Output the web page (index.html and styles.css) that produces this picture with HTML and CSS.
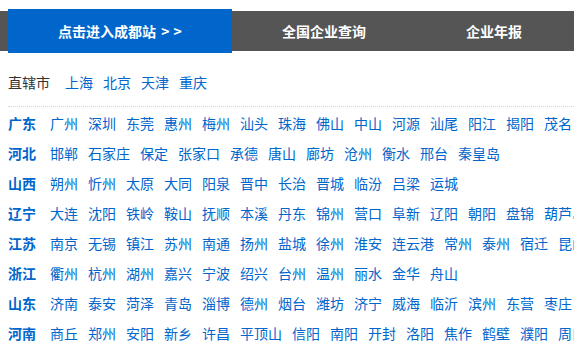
FILE: index.html
```html
<!DOCTYPE html>
<html lang="zh-CN">
<head>
<meta charset="utf-8">
<title>城市站</title>
<link rel="stylesheet" href="styles.css">
</head>
<body>
<div class="nav">
  <a class="tab tab-active">点击进入成都站 <span class="chev">&gt;&gt;</span></a>
  <a class="tab">全国企业查询</a>
  <a class="tab">企业年报</a>
</div>
<div class="content">
  <div class="direct">
    <span class="direct-label">直辖市</span>
    <a class="city">上海</a><a class="city">北京</a><a class="city">天津</a><a class="city">重庆</a>
  </div>
  <div class="provinces">
    <div class="row"><span class="prov">广东</span><a class="city">广州</a><a class="city">深圳</a><a class="city">东莞</a><a class="city">惠州</a><a class="city">梅州</a><a class="city">汕头</a><a class="city">珠海</a><a class="city">佛山</a><a class="city">中山</a><a class="city">河源</a><a class="city">汕尾</a><a class="city">阳江</a><a class="city">揭阳</a><a class="city">茂名</a><a class="city">湛江</a></div>
    <div class="row"><span class="prov">河北</span><a class="city">邯郸</a><a class="city">石家庄</a><a class="city">保定</a><a class="city">张家口</a><a class="city">承德</a><a class="city">唐山</a><a class="city">廊坊</a><a class="city">沧州</a><a class="city">衡水</a><a class="city">邢台</a><a class="city">秦皇岛</a></div>
    <div class="row"><span class="prov">山西</span><a class="city">朔州</a><a class="city">忻州</a><a class="city">太原</a><a class="city">大同</a><a class="city">阳泉</a><a class="city">晋中</a><a class="city">长治</a><a class="city">晋城</a><a class="city">临汾</a><a class="city">吕梁</a><a class="city">运城</a></div>
    <div class="row"><span class="prov">辽宁</span><a class="city">大连</a><a class="city">沈阳</a><a class="city">铁岭</a><a class="city">鞍山</a><a class="city">抚顺</a><a class="city">本溪</a><a class="city">丹东</a><a class="city">锦州</a><a class="city">营口</a><a class="city">阜新</a><a class="city">辽阳</a><a class="city">朝阳</a><a class="city">盘锦</a><a class="city">葫芦岛</a></div>
    <div class="row"><span class="prov">江苏</span><a class="city">南京</a><a class="city">无锡</a><a class="city">镇江</a><a class="city">苏州</a><a class="city">南通</a><a class="city">扬州</a><a class="city">盐城</a><a class="city">徐州</a><a class="city">淮安</a><a class="city">连云港</a><a class="city">常州</a><a class="city">泰州</a><a class="city">宿迁</a><a class="city">昆山</a></div>
    <div class="row"><span class="prov">浙江</span><a class="city">衢州</a><a class="city">杭州</a><a class="city">湖州</a><a class="city">嘉兴</a><a class="city">宁波</a><a class="city">绍兴</a><a class="city">台州</a><a class="city">温州</a><a class="city">丽水</a><a class="city">金华</a><a class="city">舟山</a></div>
    <div class="row"><span class="prov">山东</span><a class="city">济南</a><a class="city">泰安</a><a class="city">菏泽</a><a class="city">青岛</a><a class="city">淄博</a><a class="city">德州</a><a class="city">烟台</a><a class="city">潍坊</a><a class="city">济宁</a><a class="city">威海</a><a class="city">临沂</a><a class="city">滨州</a><a class="city">东营</a><a class="city">枣庄</a></div>
    <div class="row"><span class="prov">河南</span><a class="city">商丘</a><a class="city">郑州</a><a class="city">安阳</a><a class="city">新乡</a><a class="city">许昌</a><a class="city">平顶山</a><a class="city">信阳</a><a class="city">南阳</a><a class="city">开封</a><a class="city">洛阳</a><a class="city">焦作</a><a class="city">鹤壁</a><a class="city">濮阳</a><a class="city">周口</a></div>
  </div>
</div>
</body>
</html>
```
FILE: styles.css
```css
html, body {
  margin: 0;
  padding: 0;
  background: #fff;
  overflow: hidden;
}
body {
  font-family: "Noto Sans CJK SC", "Microsoft YaHei", sans-serif;
  font-size: 14px;
  color: #333;
  width: 574px;
}
.nav {
  margin-top: 11px;
  height: 40px;
  background: #555555;
  display: flex;
  padding-left: 8px;
  white-space: nowrap;
}
.tab {
  display: block;
  padding: 0 50px;
  line-height: 40px;
  color: #fff;
  font-weight: bold;
  font-size: 14px;
  flex-shrink: 0;
}
.tab-active {
  background: #0066cc;
  margin-top: -2px;
  height: 44px;
  line-height: 44px;
  width: 124px;
  text-align: center;
}
.chev {
  letter-spacing: 4px;
  margin-left: 2px;
}
.content {
  padding-left: 8px;
}
.direct {
  display: flex;
  gap: 10px;
  margin-top: 16px;
  line-height: 30px;
  padding-bottom: 9px;
  border-bottom: 1px dotted #d6d6d6;
  white-space: nowrap;
}
.direct-label {
  color: #333;
  margin-right: 5px;
}
.city {
  color: #0066cc;
  flex-shrink: 0;
}
.provinces {
  padding-top: 1px;
}
.row {
  display: flex;
  gap: 10px;
  line-height: 30px;
  white-space: nowrap;
  overflow: hidden;
}
.prov {
  color: #0066cc;
  font-weight: bold;
  margin-right: 4px;
  flex-shrink: 0;
}
```
